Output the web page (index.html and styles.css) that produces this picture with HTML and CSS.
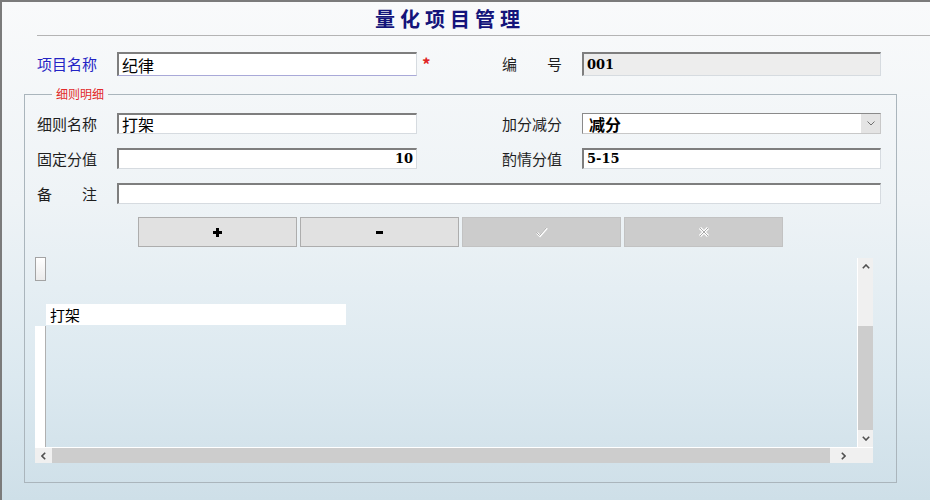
FILE: index.html
```html
<!DOCTYPE html>
<html lang="zh">
<head>
<meta charset="utf-8">
<title>量化项目管理</title>
<link rel="stylesheet" href="styles.css">
</head>
<body>
<div class="window">
  <header class="title-bar"><h1 class="title">量化项目管理</h1></header>

  <div class="form-grid top-row">
    <span class="lbl lbl-blue">项目名称</span>
    <div class="field field-tall">纪律</div>
    <span class="req">*</span>
    <span class="lbl lbl-spread">编 号</span>
    <div class="field field-tall field-disabled num">001</div>
  </div>

  <fieldset class="detail">
    <legend class="legend">细则明细</legend>
    <div class="rows">
      <div class="form-grid">
        <span class="lbl">细则名称</span>
        <div class="field">打架</div>
        <span></span>
        <span class="lbl">加分减分</span>
        <div class="field select">
          <span class="select-text">减分</span>
          <span class="select-arrow">
            <svg width="8" height="5" viewBox="0 0 8 5"><polyline points="0.5,0.5 4,4 7.5,0.5" fill="none" stroke="#707070" stroke-width="1"/></svg>
          </span>
        </div>
      </div>
      <div class="form-grid">
        <span class="lbl">固定分值</span>
        <div class="field num num-right">10</div>
        <span></span>
        <span class="lbl">酌情分值</span>
        <div class="field num">5-15</div>
      </div>
      <div class="form-grid">
        <span class="lbl lbl-spread">备 注</span>
        <div class="field field-wide"></div>
      </div>
    </div>

    <div class="btn-row">
      <div class="btn">
        <svg width="9" height="9" viewBox="0 0 9 9"><path d="M3 0h3v3h3v3h-3v3h-3v-3h-3v-3h3z" fill="#000"/></svg>
      </div>
      <div class="btn">
        <svg width="9" height="3" viewBox="0 0 9 3"><rect x="1" y="0" width="7" height="3" fill="#000"/></svg>
      </div>
      <div class="btn btn-disabled">
        <svg width="14" height="12" viewBox="0 0 14 12"><polyline points="2,7 5,10 12,2" fill="none" stroke="#ffffff" stroke-width="2.2"/><polyline points="1.5,6.5 4.5,9.5 11.5,1.5" fill="none" stroke="#a9a9a9" stroke-width="1"/></svg>
      </div>
      <div class="btn btn-disabled">
        <svg width="12" height="12" viewBox="0 0 12 12"><path d="M2 2L10 10M10 2L2 10" fill="none" stroke="#ffffff" stroke-width="3"/><path d="M2 2L10 10M10 2L2 10" fill="none" stroke="#a9a9a9" stroke-width="1"/></svg>
      </div>
    </div>

    <div class="grid">
      <div class="grid-body">
        <div class="corner-btn"></div>
        <div class="grid-cell">打架</div>
        <div class="row-strip"></div>
      </div>
      <div class="vscroll">
        <div class="sb-arrow sb-up">
          <svg width="8" height="5" viewBox="0 0 8 5"><polyline points="0.8,4.2 4,1 7.2,4.2" fill="none" stroke="#505050" stroke-width="1.6"/></svg>
        </div>
        <div class="sb-space"></div>
        <div class="sb-thumb-v"></div>
        <div class="sb-arrow sb-down">
          <svg width="8" height="5" viewBox="0 0 8 5"><polyline points="0.8,0.8 4,4 7.2,0.8" fill="none" stroke="#505050" stroke-width="1.6"/></svg>
        </div>
      </div>
      <div class="hscroll">
        <div class="sb-arrow sb-left">
          <svg width="5" height="8" viewBox="0 0 5 8"><polyline points="4.2,0.8 1,4 4.2,7.2" fill="none" stroke="#505050" stroke-width="1.6"/></svg>
        </div>
        <div class="sb-thumb-h"></div>
        <div class="sb-arrow sb-right">
          <svg width="5" height="8" viewBox="0 0 5 8"><polyline points="0.8,0.8 4,4 0.8,7.2" fill="none" stroke="#505050" stroke-width="1.6"/></svg>
        </div>
      </div>
      <div class="sb-corner"></div>
    </div>
  </fieldset>
</div>
</body>
</html>
```

FILE: styles.css
```css
* {
  box-sizing: border-box;
}

body {
  margin: 0;
  font-family: "Noto Sans CJK SC", "Noto Sans", sans-serif;
  color: #1a1a1a;
}

.window {
  width: 930px;
  height: 500px;
  border-top: 2px solid #7b7b7b;
  border-left: 2px solid #7b7b7b;
  background: linear-gradient(180deg, #f9fafb 0%, #eef3f6 40%, #dce9f0 75%, #cedfe8 100%);
  overflow: hidden;
}

.title-bar {
  height: 34px;
  margin-left: 35px;
  border-bottom: 1px solid #b4b4b4;
  padding-left: 338px;
}

.title {
  margin: 0;
  padding-top: 1px;
  font-size: 20px;
  font-weight: 700;
  line-height: 32px;
  letter-spacing: 5px;
  color: #14147a;
  white-space: nowrap;
}

.form-grid {
  display: grid;
  grid-template-columns: 80px 300px 85px 80px 299px;
  align-items: center;
}

.top-row {
  margin: 16px 0 0 35px;
}

.lbl {
  width: 60px;
  font-size: 15px;
  line-height: 20px;
  white-space: nowrap;
  color: #1e1e1e;
}

.lbl-blue {
  color: #2424c4;
}

.lbl-spread {
  text-align: justify;
  text-align-last: justify;
}

.field {
  height: 21px;
  background: #ffffff;
  border-style: solid;
  border-width: 2px 1px 1px 2px;
  border-color: #7e7e7e #d6dbe0 #d6dbe0 #7e7e7e;
  padding: 0 3px;
  font-size: 16px;
  line-height: 18px;
  color: #000;
  display: flex;
  align-items: center;
  white-space: nowrap;
}

.field-tall {
  height: 24px;
}

.top-row .field:first-of-type {
  border-bottom-color: #a9a9d8;
}

.field-disabled {
  background: #ededed;
}

.field-wide {
  grid-column: 2 / 6;
}

.num {
  font-family: "DejaVu Serif", "Liberation Serif", serif;
  font-weight: 700;
  font-size: 13px;
}

.num-right {
  justify-content: flex-end;
}

.req {
  padding-left: 5px;
  color: #e02424;
  font-size: 17px;
  font-weight: 700;
  line-height: 20px;
}

.select {
  padding-right: 0;
  justify-content: space-between;
  border-color: #8a8a8a #c8c8c8 #c8c8c8 #8a8a8a;
  border-width: 1px;
}

.select-text {
  font-weight: 700;
  padding-left: 3px;
}

.select-arrow {
  width: 19px;
  height: 100%;
  background: #e4e4e4;
  display: flex;
  align-items: center;
  justify-content: center;
}

.detail {
  margin: 10px 0 0 22px;
  width: 873px;
  min-width: 0;
  border: 1px solid #aab5bc;
  padding: 11px 12px 19px 12px;
}

.legend {
  margin-left: 15px;
  padding: 0 4px;
  font-size: 12px;
  line-height: 16px;
  color: #e22a2a;
}

.rows {
  display: flex;
  flex-direction: column;
  gap: 14px;
}

.btn-row {
  display: flex;
  gap: 3px;
  margin: 13px 0 0 101px;
}

.btn {
  width: 159px;
  height: 30px;
  background: #e1e1e1;
  border: 1px solid #adadad;
  display: flex;
  align-items: center;
  justify-content: center;
}

.btn-disabled {
  background: #cccccc;
  border-color: #c2c2c2;
}

.grid {
  margin: 10px 0 0 -2px;
  width: 838px;
  height: 206px;
  display: grid;
  grid-template-columns: 1fr 16px;
  grid-template-rows: 1fr 16px;
}

.grid-body {
  display: grid;
  grid-template-columns: 11px 300px 1fr;
  grid-template-rows: 24px 23px 21px 1fr;
}

.corner-btn {
  grid-column: 1;
  grid-row: 1;
  background: linear-gradient(180deg, #ffffff, #ebebeb);
  border: 1px solid #a3a3a3;
}

.grid-cell {
  grid-column: 2;
  grid-row: 3;
  background: #ffffff;
  padding-left: 4px;
  font-size: 15px;
  line-height: 21px;
  color: #000;
}

.row-strip {
  grid-column: 1;
  grid-row: 4;
  margin-top: 1px;
  background: #ffffff;
  border-right: 1px solid #b0b0b0;
}

.vscroll {
  grid-column: 2;
  grid-row: 1;
  margin-top: 1px;
  background: #f0f0f0;
  border-left: 1px solid #ffffff;
  display: flex;
  flex-direction: column;
}

.sb-arrow {
  display: flex;
  align-items: center;
  justify-content: center;
  background: #f0f0f0;
}

.sb-up,
.sb-down {
  height: 17px;
}

.sb-space {
  height: 51px;
}

.sb-thumb-v {
  flex: 1;
  background: #cdcdcd;
}

.hscroll {
  grid-column: 1;
  grid-row: 2;
  display: flex;
  border-top: 1px solid #ffffff;
}

.sb-left {
  width: 17px;
}

.sb-right {
  width: 27px;
}

.sb-thumb-h {
  flex: 1;
  background: #cdcdcd;
}

.sb-corner {
  grid-column: 2;
  grid-row: 2;
  background: #f0f0f0;
  border-top: 1px solid #ffffff;
}
```
